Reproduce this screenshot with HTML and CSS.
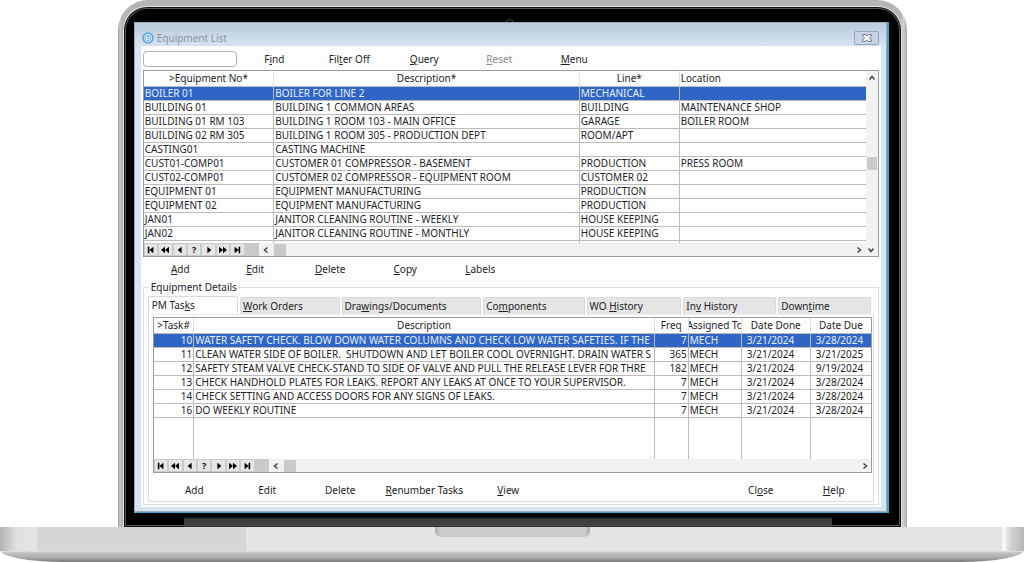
FILE: index.html
```html
<!DOCTYPE html>
<html lang="en">
<head>
<meta charset="utf-8">
<title>Equipment List</title>
<link rel="stylesheet" href="styles.css">
</head>
<body>
<svg width="0" height="0" class="defs" aria-hidden="true">
  <symbol id="first" viewBox="0 0 12 10"><path d="M2 1h2v8H2zM9 1v8L4 5z"/></symbol>
  <symbol id="rew" viewBox="0 0 12 10"><path d="M6 1v8L1 5zM11 1v8L6 5z"/></symbol>
  <symbol id="prev" viewBox="0 0 12 10"><path d="M8 1v8L3 5z"/></symbol>
  <symbol id="next" viewBox="0 0 12 10"><path d="M4 1v8l5-4z"/></symbol>
  <symbol id="fwd" viewBox="0 0 12 10"><path d="M1 1v8l5-4zM6 1v8l5-4z"/></symbol>
  <symbol id="last" viewBox="0 0 12 10"><path d="M3 1v8l5-4zM8 1h2v8H8z"/></symbol>
  <symbol id="chev" viewBox="0 0 8 8"><path d="M5.500 1.500L2.500 4l3 2.500" fill="none" stroke="#444" stroke-width="1.500"/></symbol>
</svg>
<div class="laptop">
  <div class="lid">
    <div class="bezel">
      <span class="camera"></span>
      <main class="window">
        <header class="titlebar">
          <svg class="app-icon" viewBox="0 0 12 12" aria-hidden="true"><circle cx="6" cy="6" r="5" fill="#c5e2f8" stroke="#5da5e0" stroke-width="1.600"/><circle cx="6" cy="6" r="2.600" fill="#edf7ff" stroke="#7db9e8"/><path d="M6 4v2l1 1" fill="none" stroke="#4390d5"/></svg>
          <h1 class="title">Equipment List</h1>
          <button class="close" aria-label="Close window"><svg viewBox="0 0 10 8"><path d="M.5.500h3L5 2 6.500.500h3v1.500L7.500 4l2 2v1.500h-3L5 6 3.500 7.500h-3V6l2-2-2-2z" fill="#f4f4f6" stroke="#777b88"/></svg></button>
        </header>
        <div class="client">
          <div class="toolbar">
            <input class="search" type="text" aria-label="Search equipment">
            <button class="cmd">F<u>i</u>nd</button>
            <button class="cmd">Fil<u>t</u>er Off</button>
            <button class="cmd"><u>Q</u>uery</button>
            <button class="cmd" disabled><u>R</u>eset</button>
            <button class="cmd"><u>M</u>enu</button>
          </div>

          <div class="grid equipment">
            <div class="grid-main">
              <table class="table">
                <colgroup><col class="w-no"><col><col class="w-line"><col class="w-loc"></colgroup>
                <thead><tr><th>&gt;Equipment No*</th><th>Description*</th><th>Line*</th><th class="left">Location</th></tr></thead>
                <tbody>
                  <tr class="selected"><td>BOILER 01</td><td>BOILER FOR LINE 2</td><td>MECHANICAL</td><td></td></tr>
                  <tr><td>BUILDING 01</td><td>BUILDING 1 COMMON AREAS</td><td>BUILDING</td><td>MAINTENANCE SHOP</td></tr>
                  <tr><td>BUILDING 01 RM 103</td><td>BUILDING 1 ROOM 103 - MAIN OFFICE</td><td>GARAGE</td><td>BOILER ROOM</td></tr>
                  <tr><td>BUILDING 02 RM 305</td><td>BUILDING 1 ROOM 305 - PRODUCTION DEPT</td><td>ROOM/APT</td><td></td></tr>
                  <tr><td>CASTING01</td><td>CASTING MACHINE</td><td></td><td></td></tr>
                  <tr><td>CUST01-COMP01</td><td>CUSTOMER 01 COMPRESSOR - BASEMENT</td><td>PRODUCTION</td><td>PRESS ROOM</td></tr>
                  <tr><td>CUST02-COMP01</td><td>CUSTOMER 02 COMPRESSOR - EQUIPMENT ROOM</td><td>CUSTOMER 02</td><td></td></tr>
                  <tr><td>EQUIPMENT 01</td><td>EQUIPMENT MANUFACTURING</td><td>PRODUCTION</td><td></td></tr>
                  <tr><td>EQUIPMENT 02</td><td>EQUIPMENT MANUFACTURING</td><td>PRODUCTION</td><td></td></tr>
                  <tr><td>JAN01</td><td>JANITOR CLEANING ROUTINE - WEEKLY</td><td>HOUSE KEEPING</td><td></td></tr>
                  <tr><td>JAN02</td><td>JANITOR CLEANING ROUTINE - MONTHLY</td><td>HOUSE KEEPING</td><td></td></tr>
                  <tr class="cut"><td></td><td></td><td></td><td></td></tr>
                </tbody>
              </table>
              <div class="vscroll"><svg class="chev up"><use href="#chev"/></svg><span class="vthumb"></span></div>
            </div>
            <div class="navbar">
              <div class="nav">
                <button aria-label="First"><svg><use href="#first"/></svg></button>
                <button aria-label="Page back"><svg><use href="#rew"/></svg></button>
                <button aria-label="Previous"><svg><use href="#prev"/></svg></button>
                <button>?</button>
                <button aria-label="Next"><svg><use href="#next"/></svg></button>
                <button aria-label="Page forward"><svg><use href="#fwd"/></svg></button>
                <button aria-label="Last"><svg><use href="#last"/></svg></button>
              </div>
              <div class="hscroll"><svg class="chev"><use href="#chev"/></svg><span class="hthumb"></span><svg class="chev end"><use href="#chev"/></svg></div>
              <svg class="chev down"><use href="#chev"/></svg>
            </div>
          </div>

          <div class="actions">
            <button class="cmd"><u>A</u>dd</button>
            <button class="cmd"><u>E</u>dit</button>
            <button class="cmd"><u>D</u>elete</button>
            <button class="cmd"><u>C</u>opy</button>
            <button class="cmd"><u>L</u>abels</button>
          </div>

          <fieldset class="details">
            <legend>Equipment Details</legend>
            <div class="tabs" role="tablist">
              <button class="tab t1 active" role="tab" aria-selected="true">PM Tas<u>k</u>s</button>
              <button class="tab t2" role="tab"><u>W</u>ork Orders</button>
              <button class="tab t3" role="tab">Dra<u>w</u>ings/Documents</button>
              <button class="tab t4" role="tab">Co<u>m</u>ponents</button>
              <button class="tab t5" role="tab">WO <u>H</u>istory</button>
              <button class="tab t6" role="tab">In<u>v</u> History</button>
              <button class="tab t7" role="tab">Down<u>t</u>ime</button>
            </div>
            <div class="panel" role="tabpanel">
              <div class="grid tasks">
                <table class="table">
                  <colgroup><col class="w-task"><col><col class="w-freq"><col class="w-who"><col class="w-done"><col class="w-due"></colgroup>
                  <thead><tr><th>&gt;Task#</th><th>Description</th><th>Freq</th><th><span class="clip">Assigned To</span></th><th>Date Done</th><th>Date Due</th></tr></thead>
                  <tbody>
                    <tr class="selected"><td class="num">10</td><td>WATER SAFETY CHECK. BLOW DOWN WATER COLUMNS AND CHECK LOW WATER SAFETIES. IF THE</td><td class="num">7</td><td>MECH</td><td class="date">3/21/2024</td><td class="date">3/28/2024</td></tr>
                    <tr><td class="num">11</td><td>CLEAN WATER SIDE OF BOILER.&nbsp; SHUTDOWN AND LET BOILER COOL OVERNIGHT. DRAIN WATER S</td><td class="num">365</td><td>MECH</td><td class="date">3/21/2024</td><td class="date">3/21/2025</td></tr>
                    <tr><td class="num">12</td><td>SAFETY STEAM VALVE CHECK-STAND TO SIDE OF VALVE AND PULL THE RELEASE LEVER FOR THRE</td><td class="num">182</td><td>MECH</td><td class="date">3/21/2024</td><td class="date">9/19/2024</td></tr>
                    <tr><td class="num">13</td><td>CHECK HANDHOLD PLATES FOR LEAKS. REPORT ANY LEAKS AT ONCE TO YOUR SUPERVISOR.</td><td class="num">7</td><td>MECH</td><td class="date">3/21/2024</td><td class="date">3/28/2024</td></tr>
                    <tr><td class="num">14</td><td>CHECK SETTING AND ACCESS DOORS FOR ANY SIGNS OF LEAKS.</td><td class="num">7</td><td>MECH</td><td class="date">3/21/2024</td><td class="date">3/28/2024</td></tr>
                    <tr><td class="num">16</td><td>DO WEEKLY ROUTINE</td><td class="num">7</td><td>MECH</td><td class="date">3/21/2024</td><td class="date">3/28/2024</td></tr>
                    <tr class="blank"><td></td><td></td><td></td><td></td><td></td><td></td></tr>
                  </tbody>
                </table>
                <div class="navbar">
                  <div class="nav">
                    <button aria-label="First"><svg><use href="#first"/></svg></button>
                    <button aria-label="Page back"><svg><use href="#rew"/></svg></button>
                    <button aria-label="Previous"><svg><use href="#prev"/></svg></button>
                    <button>?</button>
                    <button aria-label="Next"><svg><use href="#next"/></svg></button>
                    <button aria-label="Page forward"><svg><use href="#fwd"/></svg></button>
                    <button aria-label="Last"><svg><use href="#last"/></svg></button>
                  </div>
                  <div class="hscroll"><svg class="chev"><use href="#chev"/></svg><span class="hthumb"></span><svg class="chev end"><use href="#chev"/></svg></div>
                </div>
              </div>
              <div class="task-actions">
                <button class="cmd">Add</button>
                <button class="cmd">Edit</button>
                <button class="cmd">Delete</button>
                <button class="cmd wide"><u>R</u>enumber Tasks</button>
                <button class="cmd"><u>V</u>iew</button>
                <button class="cmd push">Cl<u>o</u>se</button>
                <button class="cmd"><u>H</u>elp</button>
              </div>
            </div>
          </fieldset>
        </div>
      </main>
      <div class="hinge"></div>
    </div>
  </div>
  <div class="base"><div class="notch"></div></div>
</div>
</body>
</html>
```
FILE: styles.css
```css
* { box-sizing: border-box; }

body {
  margin: 0;
  background: #fff;
  color: #1e1e26;
  font: 10px/14px "Noto Sans", "DejaVu Sans", sans-serif;
}

button, input { font: inherit; color: inherit; }
button { padding: 0; border: 0; background: none; white-space: nowrap; }
u { text-underline-offset: 1px; }
.defs { position: absolute; }

.laptop { display: flex; flex-direction: column; min-height: 100vh; }

.lid {
  flex: 1;
  display: flex;
  margin: 0 11.4% 0 11.5%;
  padding: 6px 5px 0;
  border-radius: 30px 30px 0 0;
  background: linear-gradient(90deg, #999 0, #c8c8c8 2px, #b4b4b4 4px, transparent 6px, transparent calc(100% - 6px), #d5d3d5 calc(100% - 4px), #aaa 100%), #b5b5b5;
}

.bezel {
  position: relative;
  flex: 1;
  min-width: 0;
  display: flex;
  flex-direction: column;
  padding: 15px 12px 0 10px;
  border: 1px solid #e2e5e2;
  border-bottom: 0;
  border-radius: 24px 24px 0 0;
  background: #000;
  box-shadow: inset 0 0 0 1px #111, inset 0 0 0 2px #555;
}

.camera {
  position: absolute;
  top: 12px;
  left: 49%;
  width: 9px;
  height: 9px;
  border: 1px solid #444;
  border-radius: 50%;
}

.window {
  position: relative;
  flex: 1;
  display: flex;
  flex-direction: column;
  padding: 1px 6px 5px;
  border: 1px solid #9aa8b5;
  border-right: 2px solid #42a5c4;
  border-bottom-color: #42a5c4;
  background: linear-gradient(#bccbdc, #d6e4f3 24px);
  box-shadow: inset -1px -1px #9caab8;
}

.titlebar { display: flex; align-items: center; gap: 3px; height: 22px; padding: 6px 2px 0 1px; }
.app-icon { width: 12px; height: 12px; }
.title { margin: 0; flex: 1; font-size: 10px; font-weight: 400; color: #8c939d; }
.close {
  display: grid;
  place-items: center;
  width: 25px;
  height: 14px;
  border: 1px solid #91a5c2;
  border-radius: 2px;
  background: #c6d5e8;
}
.close svg { width: 10px; height: 8px; }

.client { flex: 1; padding: 3px 2px 1px; background: #fdfdfd; }

.toolbar, .actions { display: flex; align-items: center; }
.toolbar { height: 20px; margin-bottom: 1px; }
.search {
  width: 94px;
  height: 16px;
  padding: 0 4px;
  border: 1px solid #b4b4b4;
  border-radius: 4px;
  background: #fff;
}
.cmd { width: 75px; }
.cmd:disabled { color: #8c8c8c; }
.actions { height: 23px; }

.grid { border: 1px solid #9b9b9b; background: #fff; }
.grid-main { display: flex; }
.table {
  flex: 1;
  width: 100%;
  min-width: 0;
  table-layout: fixed;
  border-collapse: collapse;
}
th, td {
  height: 14px;
  padding: 0 1px;
  border-right: 1px solid #bcbcbc;
  border-bottom: 1px solid #bcbcbc;
  line-height: 13px;
  font-weight: 400;
  text-align: left;
  white-space: nowrap;
  overflow: hidden;
}
th { height: 15px; border-right-color: #e2e2e2; text-align: center; }
th.left { text-align: left; }
th:last-child, td:last-child { border-right: 0; }
.selected td { background: #2f66c5; color: #e6efff; }
.num { text-align: right; }
.date { padding-left: 5px; }
.clip { display: flex; justify-content: center; }
.cut td { height: 3px; border-bottom: 0; }
.blank td { height: 42px; border-bottom: 0; }

.w-no { width: 130px; }
.w-line { width: 100px; }
.w-loc { width: 187px; }
.w-task { width: 40px; }
.w-freq { width: 34px; }
.w-who { width: 53px; }
.w-done { width: 69px; }
.w-due { width: 61px; }

.vscroll {
  display: flex;
  flex-direction: column;
  align-items: center;
  width: 12px;
  padding-top: 3px;
  background: #f1f2f2;
}
.vthumb { width: 10px; height: 13px; margin-top: 75px; background: #c9cac9; }
.chev { width: 8px; height: 8px; flex: none; }
.up { transform: rotate(90deg); }
.down { transform: rotate(-90deg); margin: 0 3px 0 2px; }
.end { transform: rotate(180deg); margin-left: auto; }

.navbar { display: flex; align-items: center; height: 13px; background: #f1f2f2; }
.nav { display: flex; gap: 2px; width: 115px; height: 13px; padding: 1px 15px 1px 1px; background: #c9cac9; }
.nav button {
  display: grid;
  place-items: center;
  flex: 1;
  background: #e6e6e6;
  color: #111;
  font-size: 9px;
  font-weight: 700;
  line-height: 11px;
}
.nav svg { width: 10px; height: 8px; }
.hscroll { flex: 1; display: flex; align-items: center; gap: 4px; height: 13px; padding: 0 2px 0 3px; }
.hthumb { width: 12px; height: 12px; background: #c9cac9; }

.details { min-width: 0; margin: 0; padding: 2px 4px 2px; border: 1px solid #dedede; }
.details legend { margin-left: 1px; padding: 0 2px; }
.tabs { display: flex; align-items: flex-end; gap: 2px; padding-right: 3px; }
.tab {
  height: 17px;
  padding: 0 2px;
  border: 1px solid #dadada;
  border-bottom: 0;
  border-radius: 2px 2px 0 0;
  background: #e5e5e5;
  text-align: left;
}
.tab.active { height: 18px; padding: 0 3px 2px; background: #fdfdfd; }
.t1 { flex: 88; }
.t2 { flex: 100; }
.t3 { flex: 143; }
.t4 { flex: 102; }
.t5 { flex: 95; }
.t6 { flex: 93; }
.t7 { flex: 93; }
.panel { padding: 2px 1px 0 4px; border: 1px solid #dedede; border-top-color: #ececec; }
.task-actions { display: flex; align-items: center; height: 28px; padding: 6px 2px 0 5px; }
.task-actions .cmd { width: 73px; }
.task-actions .wide { width: 95px; }
.push { margin-left: auto; }

.hinge { height: 14px; margin: 0 7.6% 0 6.6%; background: linear-gradient(#000 4px, #3b3b3b 6px, #444 13px, #222); }

.base {
  height: 35px;
  border-radius: 0 0 64px 64px / 0 0 12px 12px;
  background:
    linear-gradient(90deg, #b2b3b3 0, #d2d3d3 12px, #dfe0e0 16px, #e5e5e5 36px, transparent 38px, transparent calc(100% - 22px), #fff calc(100% - 21px), #d5d6d6 calc(100% - 14px), #b5b7b7) top / 100% 24px no-repeat,
    linear-gradient(90deg, #d5d7d6 24%, #e4e4e4 24%) top / 100% 24px no-repeat,
    linear-gradient(#e4e4e4 24px, #bfc0c2 26px, #a9abad 31px, #77777a 35px);
}
.notch {
  width: 155px;
  height: 10px;
  margin: 0 auto;
  border-radius: 0 0 6px 6px;
  background: linear-gradient(90deg, #aaa, #c9cccb 5px, #c9cccb calc(100% - 5px), #aaa);
}
```
